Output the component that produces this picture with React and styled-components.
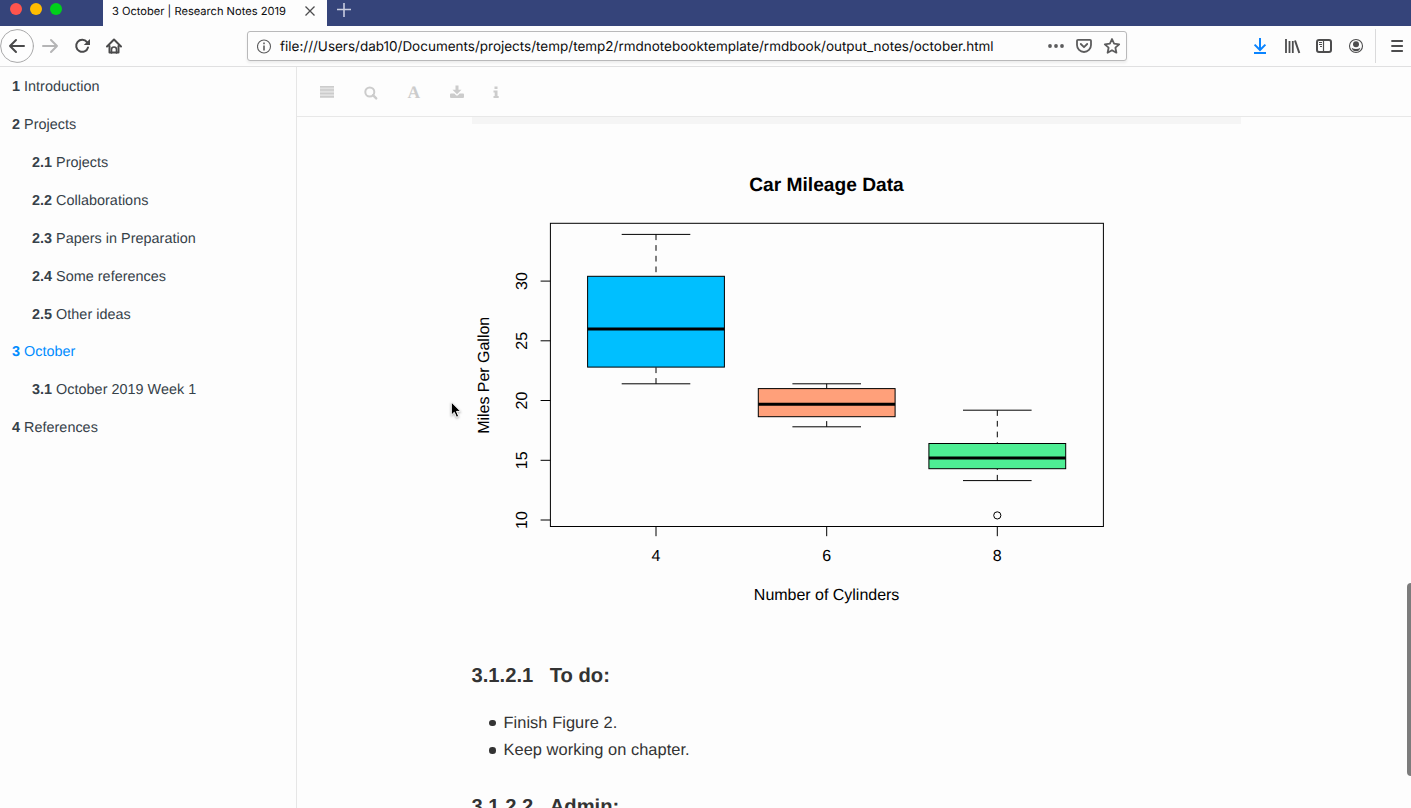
import React from "react";
import styled, { createGlobalStyle } from "styled-components";

const GlobalStyle = createGlobalStyle`
  * { box-sizing: border-box; }
  html, body { margin: 0; overflow: hidden; background: #fdfdfd; }
`;

const Browser = styled.div`
  display: flex;
  flex-direction: column;
  width: 1411px;
  height: 808px;
  overflow: hidden;
  position: relative;
  background: #fdfdfd;
  font-family: "Liberation Sans", Arial, sans-serif;
  text-rendering: geometricPrecision;
`;

const TabStrip = styled.header`
  display: flex;
  flex: 0 0 26px;
  background: #35447a;
`;

const WindowButtons = styled.div`
  display: flex;
  gap: 8px;
  width: 103px;
  padding: 3px 0 0 10px;
`;

const WindowButton = styled.span`
  width: 12px;
  height: 12px;
  border-radius: 50%;
  background: ${(p) => p.$color};
`;

const Tab = styled.div`
  display: flex;
  align-items: center;
  justify-content: space-between;
  width: 224px;
  padding: 0 11px 5px 9px;
  background: #fdfdfd;
  color: #0c0c0d;
  font: 11.12px/16px Inter, sans-serif;
  white-space: nowrap;
`;

const NewTab = styled.div`
  padding: 2px 0 0 9px;
  line-height: 0;
`;

const NavBar = styled.div`
  display: flex;
  align-items: center;
  flex: 0 0 41px;
  border-bottom: 1px solid #e0e0e1;
  background: #fdfdfd;
`;

const NavButtons = styled.div`
  display: flex;
  width: 247px;
  line-height: 0;
`;

const UrlBar = styled.div`
  display: flex;
  align-items: center;
  width: 880px;
  height: 30px;
  padding: 0 5px 0 9px;
  border: 1px solid #b9b9ba;
  border-radius: 3px;
  box-shadow: 0 2px 3px rgba(0, 0, 0, 0.07);
  background: #fdfdfd;
  svg { flex: none; }
`;

const Url = styled.span`
  flex: 1;
  margin-left: 8px;
  padding-top: 2px;
  color: #0c0c0d;
  font: 13.49px/18px Inter, sans-serif;
  white-space: nowrap;
`;

const BrowserTools = styled.div`
  display: flex;
  margin-left: auto;
  line-height: 0;
`;

const Page = styled.div`
  display: flex;
  flex: 1;
  min-height: 0;
`;

const Sidebar = styled.nav`
  width: 297px;
  border-right: 1px solid #e6e6e6;
  background: #fdfdfd;
`;

const Chapter = styled.div`
  height: 37.93px;
  padding: 11px 0 0 ${(p) => (p.$sub ? 32 : 12)}px;
  color: ${(p) => (p.$active ? "#008cff" : "#364149")};
  font-size: 14.4px;
  line-height: 18px;
  letter-spacing: 0.02px;
  white-space: nowrap;
`;

const Book = styled.main`
  display: flex;
  flex-direction: column;
  flex: 1;
  min-width: 0;
`;

const BookToolbar = styled.div`
  display: flex;
  align-items: center;
  flex: 0 0 50px;
  padding-left: 13px;
  border-bottom: 1px solid #e8e8e8;
  svg { display: block; }
`;

const Section = styled.article`
  width: 769px;
  margin-left: 175px;
  color: #333;
`;

const CodeEnd = styled.div`
  height: 7px;
  background: #f5f5f5;
`;

const Figure = styled.svg`
  display: block;
  width: 770px;
  height: 516px;
  font: 16px "Liberation Sans", Arial, sans-serif;
`;

const Heading = styled.h4`
  display: flex;
  gap: 16.5px;
  margin: ${(p) => p.$top}px 0 0 -0.5px;
  font-size: 20.2px;
  line-height: 26px;
`;

const TodoList = styled.ul`
  margin: 21px 0 0;
  padding-left: 17px;
  list-style: none;
  font-size: 16.4px;
  line-height: 27.2px;
  letter-spacing: 0.05px;
`;

const TodoItem = styled.li`
  display: flex;
  align-items: center;
  &::before {
    content: "";
    width: 6.5px;
    height: 6.5px;
    margin-right: 8px;
    border-radius: 50%;
    background: #333;
  }
`;

const ScrollThumb = styled.div`
  position: absolute;
  top: 583px;
  right: -4px;
  width: 8px;
  height: 193px;
  border-radius: 4px;
  background: #7c7c7c;
`;

const Pointer = styled.svg`
  position: absolute;
  left: 448px;
  top: 399px;
  filter: drop-shadow(0 1px 1px rgba(0, 0, 0, 0.3));
`;

const chapters = [
  ["1", "Introduction"],
  ["2", "Projects"],
  ["2.1", "Projects"],
  ["2.2", "Collaborations"],
  ["2.3", "Papers in Preparation"],
  ["2.4", "Some references"],
  ["2.5", "Other ideas"],
  ["3", "October"],
  ["3.1", "October 2019 Week 1"],
  ["4", "References"],
];

const boxes = [
  { label: "4", x: 656, max: 234.4, q3: 276.3, med: 328.9, q1: 367.1, min: 383.8, fill: "#00bfff" },
  { label: "6", x: 826.7, max: 383.8, q3: 388.6, med: 404.2, q1: 416.7, min: 426.8, fill: "#ffa07a" },
  { label: "8", x: 997.3, max: 410.2, q3: 443.5, med: 458, q1: 468.7, min: 480.6, fill: "#4eee94" },
];

const ticks = [[30, 281.1], [25, 340.8], [20, 400.5], [15, 460.3], [10, 520]];

function BoxPlot() {
  return (
    <Figure viewBox="472 124 770 516" stroke="#000" strokeWidth="1" fill="none">
      <text x="826.5" y="191" textAnchor="middle" fontSize="19.2" fontWeight="700" fill="#000" stroke="none" textLength="154.5">Car Mileage Data</text>
      {boxes.map((b) => (
        <g key={b.label}>
          <path d={`M${b.x} ${b.max}V${b.q3}M${b.x} ${b.min}V${b.q1}`} strokeDasharray="5.7 5" />
          <path d={`M${b.x - 34.3} ${b.max}h68.6M${b.x - 34.3} ${b.min}h68.6`} />
          <rect x={b.x - 68.4} y={b.q3} width="136.8" height={b.q1 - b.q3} fill={b.fill} />
          <path d={`M${b.x - 68.4} ${b.med}h136.8`} strokeWidth="3" />
          <path d={`M${b.x} 526.4v9.8`} />
          <text x={b.x} y="561.4" textAnchor="middle" fill="#000" stroke="none">{b.label}</text>
        </g>
      ))}
      <circle cx="997.3" cy="515.4" r="3.6" />
      <rect x="550.4" y="223.3" width="553" height="303.2" />
      {ticks.map(([v, y]) => (
        <g key={v}>
          <path d={`M550.4 ${y}h-9.8`} />
          <text transform={`translate(526.6 ${y}) rotate(-90)`} textAnchor="middle" fill="#000" stroke="none">{v}</text>
        </g>
      ))}
      <text transform="translate(488.8 375.3) rotate(-90)" textAnchor="middle" fill="#000" stroke="none" textLength="117">Miles Per Gallon</text>
      <text x="826.6" y="600" textAnchor="middle" fill="#000" stroke="none" textLength="145.5">Number of Cylinders</text>
    </Figure>
  );
}

function NavIcons() {
  return (
    <svg width="130" height="40" viewBox="0 26 130 40" fill="none" stroke="#4a4a4b" strokeWidth="2" strokeLinecap="round" strokeLinejoin="round">
      <circle cx="17" cy="46" r="16.4" stroke="#a9a9aa" strokeWidth="1" fill="#fefefe" />
      <path d="M24 46H10M16 40l-6 6 6 6" />
      <path d="M43 46h14M51 40l6 6-6 6" stroke="#b5b5b6" />
      <path d="M87 42.2a6 6 0 1 0 1 5.2" />
      <path d="M90 39v6h-6.2z" fill="#4a4a4b" stroke="none" />
      <path d="M107 46.5l7-7 7 7M109.500 46v6.500h9V46" />
      <path d="M111.500 53v-3.500q0-2.500 2.500-2.500t2.500 2.500V53" strokeWidth="1.600" />
    </svg>
  );
}

function UrlActions() {
  return (
    <svg width="76" height="20" viewBox="1045 36 76 20" fill="none" stroke="#5c5c5d" strokeWidth="1.8" strokeLinejoin="round" strokeLinecap="round">
      <g fill="#5c5c5d" stroke="none">
        <circle cx="1050" cy="46" r="1.9" /><circle cx="1056" cy="46" r="1.9" /><circle cx="1062" cy="46" r="1.9" />
      </g>
      <path d="M1078 39.800h12q1 0 1 1v4.200a7 7 0 0 1-14 0v-4.200q0-1 1-1z" />
      <path d="M1080.800 44l3.200 3.200 3.200-3.200" />
      <path d="M1112 39l2.100 4.700 5.100.6-3.800 3.400 1 5-4.400-2.500-4.400 2.500 1-5-3.800-3.400 5.100-.6z" />
    </svg>
  );
}

function ToolIcons() {
  return (
    <svg width="161" height="40" viewBox="1250 26 161 40" fill="none" stroke="#4d4d4e" strokeWidth="2">
      <path d="M1260 38v12M1254.600 44.600l5.400 5.400 5.400-5.400M1254 53h12" stroke="#0a84ff" />
      <path d="M1286 39v14M1289.500 41v12M1292.800 41v12" strokeWidth="1.800" />
      <path d="M1295 40.500l4.300 12.500" />
      <rect x="1317" y="40" width="14" height="12" rx="2" />
      <path d="M1323.500 40v12" strokeWidth="1.200" />
      <path d="M1319 42.500h3M1319 44.500h3M1320 46.500h2" strokeWidth="1" />
      <circle cx="1356" cy="46" r="6.500" strokeWidth="1.100" />
      <circle cx="1356" cy="44.200" r="3" fill="#4d4d4e" stroke="none" />
      <path d="M1351.600 47.700q2 1.300 4.400 1.300t4.400-1.300q-1 3.500-4.400 3.500t-4.400-3.500z" fill="#4d4d4e" stroke="none" />
      <path d="M1375.500 29v34" stroke="#dadadb" strokeWidth="1" />
      <path d="M1392 41h10.200M1392 46h10.200M1392 51h10.200" strokeLinecap="round" strokeWidth="1.800" />
    </svg>
  );
}

function BookIcons() {
  return (
    <svg width="210" height="30" viewBox="310 77 210 30" fill="#ccc">
      <path d="M320 86h14v12h-14z" fill="#e2e2e2" />
      <path d="M320 86h14v1.500h-14zM320 89.300h14v1.500h-14zM320 92.700h14v1.500h-14zM320 96h14v1.500h-14z" />
      <circle cx="369.800" cy="92" r="4.500" fill="none" stroke="#ccc" strokeWidth="2" />
      <path d="M373 95.200l3.200 3.200" stroke="#ccc" strokeWidth="2.400" strokeLinecap="round" />
      <text x="407.500" y="98.300" fontFamily="Liberation Serif, serif" fontWeight="700" fontSize="17.500">A</text>
      <path d="M455.500 85.500h3v4.200h3l-4.500 4.600-4.500-4.600h3z" />
      <path d="M451 93.500h3.300l1.700 1.800q1 .9 2 0l1.700-1.800h3.300q1 0 1 1v2.500q0 1-1 1h-12q-1 0-1-1v-2.500q0-1 1-1z" />
      <path d="M494.500 86.500h3v2.400h-3zM493.500 90.500h4v5.600h1.200v2h-5.200v-2h1.200v-3.600h-1.200z" />
    </svg>
  );
}

export default function App() {
  return (
    <Browser>
      <GlobalStyle />
      <TabStrip>
        <WindowButtons>
          <WindowButton $color="#ff544d" />
          <WindowButton $color="#ffbd00" />
          <WindowButton $color="#00d11b" />
        </WindowButtons>
        <Tab>
          <span>3 October | Research Notes 2019</span>
          <svg width="12" height="12" viewBox="0 0 12 12" stroke="#4d4d4e" strokeWidth="1.3"><path d="M1.500 1.500l9 9M10.500 1.500l-9 9" /></svg>
        </Tab>
        <NewTab>
          <svg width="16" height="16" viewBox="0 0 16 16" stroke="#c9cde0" strokeWidth="1.600"><path d="M8 1v14M1 7.500h14" /></svg>
        </NewTab>
      </TabStrip>
      <NavBar>
        <NavButtons><NavIcons /></NavButtons>
        <UrlBar>
          <svg width="15" height="15" viewBox="0 0 15 15" fill="none" stroke="#5c5c5d">
            <circle cx="7" cy="7.500" r="6.500" strokeWidth="1.100" />
            <path d="M7 3.500v1.800M7 6.500v5" strokeWidth="1.600" />
          </svg>
          <Url>file:///Users/dab10/Documents/projects/temp/temp2/rmdnotebooktemplate/rmdbook/output_notes/october.html</Url>
          <UrlActions />
        </UrlBar>
        <BrowserTools><ToolIcons /></BrowserTools>
      </NavBar>
      <Page>
        <Sidebar>
          {chapters.map(([number, title]) => (
            <Chapter key={number} $sub={number.length > 1} $active={number === "3"}>
              <b>{number}</b> {title}
            </Chapter>
          ))}
        </Sidebar>
        <Book>
          <BookToolbar>
            <BookIcons />
          </BookToolbar>
          <Section>
            <CodeEnd />
            <BoxPlot />
            <Heading $top={22.5}><span>3.1.2.1</span><span>To do:</span></Heading>
            <TodoList>
              <TodoItem>Finish Figure 2.</TodoItem>
              <TodoItem>Keep working on chapter.</TodoItem>
            </TodoList>
            <Heading $top={30}><span>3.1.2.2</span><span>Admin:</span></Heading>
          </Section>
        </Book>
      </Page>
      <ScrollThumb />
      <Pointer width="16" height="22" viewBox="448 399 16 22">
        <path d="M451.300 402v13.200l3-2.900 2.200 5 2.200-1-2.200-4.900h4.200z" fill="#000" stroke="#fff" strokeWidth="1" />
      </Pointer>
    </Browser>
  );
}
